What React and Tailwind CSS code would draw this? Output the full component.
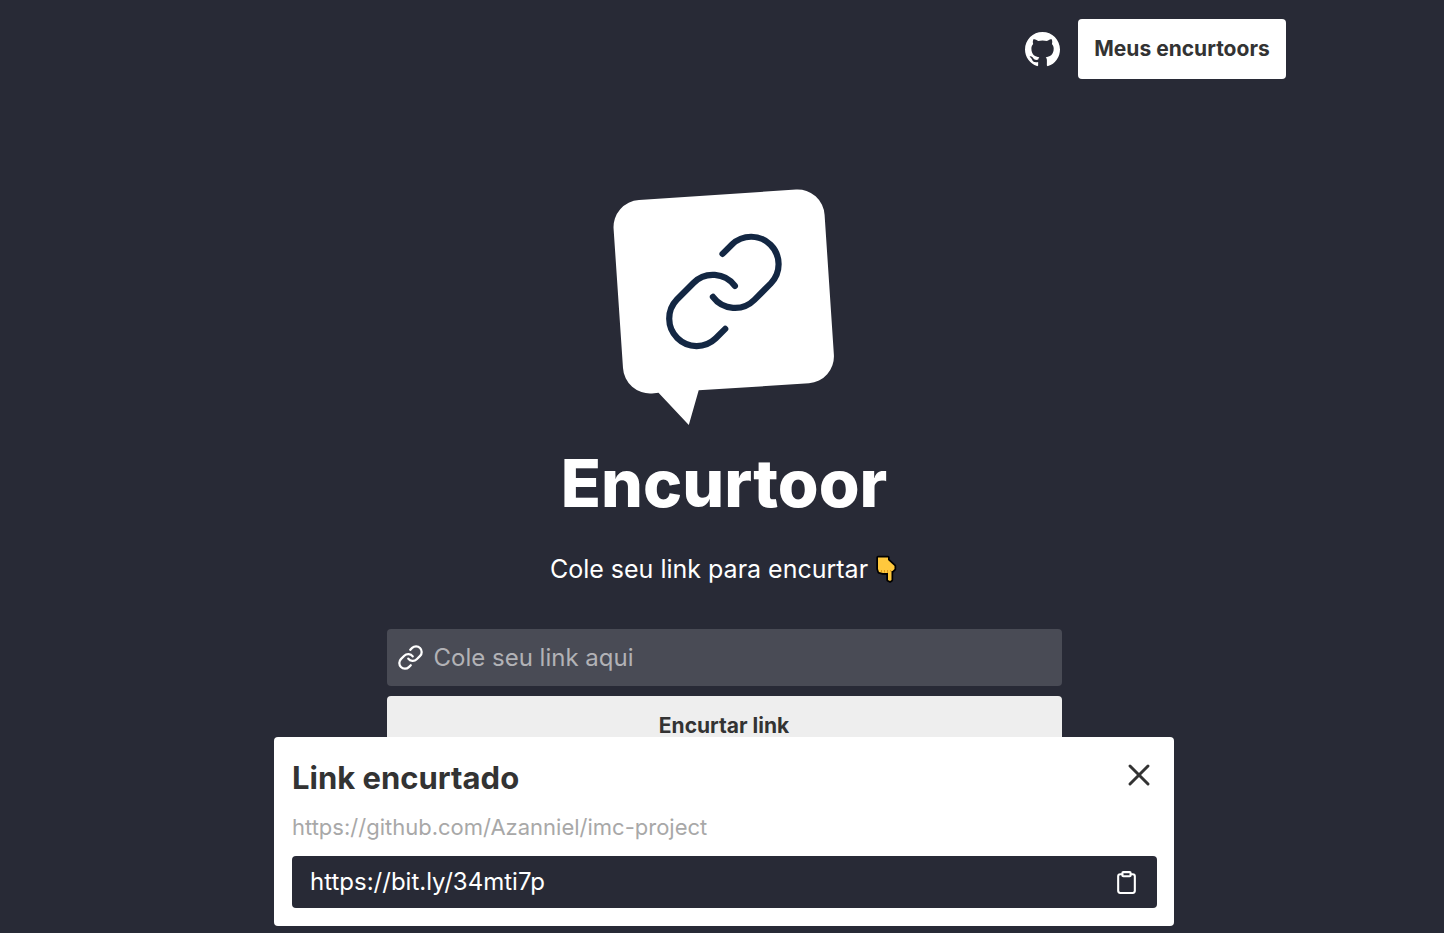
import { BsGithub } from "react-icons/bs";
import { FiClipboard, FiLink, FiX } from "react-icons/fi";

function Logo() {
  return (
    <svg
      width="222"
      height="236"
      viewBox="0 0 222 236"
      role="img"
      aria-label="Encurtoor"
    >
      <path
        fill="#fff"
        d="M.6 40A27 27 0 0 1 26 11L183 .5A27 27 0 0 1 211.6 26L220.9 166A27 27 0 0 1 196 194.3L85.7 201.3L75.8 236L45.5 203.8L39 204.4A27 27 0 0 1 10 179Z"
      />
      <g
        transform="translate(44.9 36.4) scale(5.5)"
        fill="none"
        stroke="#132743"
        strokeWidth="1.13"
        strokeLinecap="round"
        strokeLinejoin="round"
      >
        <path d="M10 13a5 5 0 0 0 7.54.54l3-3a5 5 0 0 0-7.07-7.07l-1.72 1.71" />
        <path d="M14 11a5 5 0 0 0-7.54-.54l-3 3a5 5 0 0 0 7.07 7.07l1.71-1.71" />
      </g>
    </svg>
  );
}

function PointingDown() {
  return (
    <svg width="24" height="28" viewBox="0 0 24 28" aria-hidden="true">
      <path
        fill="#ffc83d"
        stroke="#000"
        strokeWidth="3.4"
        strokeLinejoin="round"
        paintOrder="stroke"
        d="M4 2.500H14V5L20.500 11V14L18.500 16H17.500V25L16 26L14 25V18H9L5 17L4 14Z"
      />
      <path
        fill="none"
        stroke="#d98f12"
        strokeWidth="0.8"
        d="M7.500 15v2M10.500 15v2.500M13.500 15v3M16.500 15v1.500"
      />
    </svg>
  );
}

export default function App() {
  return (
    <div className="min-h-screen bg-[#282a36] pl-1 font-['Inter',sans-serif] text-white">
      <header className="mx-auto flex max-w-[1124px] items-center justify-end gap-[18px] pt-[19px]">
        <a href="https://github.com" aria-label="GitHub">
          <BsGithub size={35} />
        </a>
        <a
          href="#meus-encurtoors"
          className="flex h-[60px] w-52 items-center justify-center rounded bg-white text-[21px] font-bold text-[#333]"
        >
          Meus encurtoors
        </a>
      </header>

      <main className="mx-auto flex max-w-[675px] flex-col items-center pt-[110px]">
        <Logo />
        <h1 className="mt-[18px] text-[66px] leading-[80px] font-extrabold">Encurtoor</h1>
        <p className="mt-7 flex items-center gap-1.5 text-[25px] leading-9">
          Cole seu link para encurtar
          <PointingDown />
        </p>
        <form
          className="mt-[42px] flex w-full flex-col gap-2.5"
          onSubmit={(event) => event.preventDefault()}
        >
          <label className="flex h-[57px] items-center gap-2.5 rounded bg-[#494b55] px-2.5">
            <FiLink size={27} aria-hidden="true" />
            <input
              type="url"
              aria-label="Cole seu link aqui"
              placeholder="Cole seu link aqui"
              className="min-w-0 flex-1 bg-transparent text-[24px] outline-none placeholder:text-[#b2b2b6]"
            />
          </label>
          <button
            type="submit"
            className="h-[60px] rounded bg-[#eee] text-[21px] font-bold text-[#333]"
          >
            Encurtar link
          </button>
        </form>
      </main>

      <section
        aria-labelledby="resultado"
        className="fixed right-0 bottom-[7px] left-1 mx-auto max-w-[900px] rounded bg-white py-[18px] pr-[17px] pl-[18px]"
      >
        <div className="flex items-start justify-between">
          <h2
            id="resultado"
            className="text-[31px] leading-[46px] font-bold text-[#333]"
          >
            Link encurtado
          </h2>
          <button
            type="button"
            aria-label="Fechar"
            className="flex h-10 items-center text-[#333]"
          >
            <FiX size={36} />
          </button>
        </div>
        <p className="pt-2.5 pb-3 text-[22px] leading-[33px] text-[#a8a8a8]">
          https://github.com/Azanniel/imc-project
        </p>
        <div className="flex h-[52px] items-center justify-between rounded bg-[#282a36] px-[18px] text-[24px]">
          <a href="https://bit.ly/34mti7p">https://bit.ly/34mti7p</a>
          <button type="button" aria-label="Copiar link">
            <FiClipboard size={25} />
          </button>
        </div>
      </section>
    </div>
  );
}
